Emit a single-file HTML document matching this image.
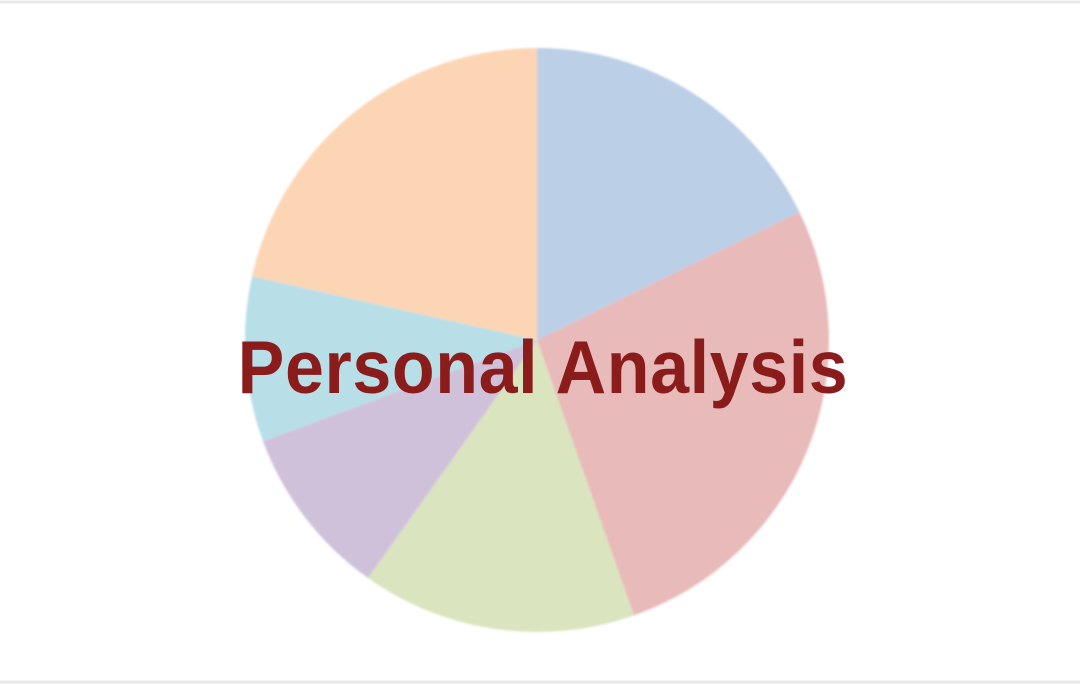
<!DOCTYPE html>
<html><head><meta charset="utf-8"><style>
html,body{margin:0;padding:0;background:#fff;}
body{width:1080px;height:684px;position:relative;overflow:hidden;font-family:"Liberation Sans",sans-serif;}
.t{position:absolute;left:0;width:1080px;top:322px;text-align:center;font-weight:bold;font-size:70px;color:#8a1c1c;line-height:90px;transform:scaleY(1.08);letter-spacing:0.6px;padding-left:6px;box-sizing:border-box;}
</style></head><body>
<svg width="1080" height="684" style="position:absolute;left:0;top:0">
<defs><filter id="b" x="-5%" y="-5%" width="110%" height="110%"><feGaussianBlur stdDeviation="1"/></filter></defs>
<line x1="0" y1="2" x2="1080" y2="2" stroke="#e8e8e8" stroke-width="3"/>
<line x1="0" y1="682" x2="1080" y2="682" stroke="#e8e8e8" stroke-width="3"/>
<g filter="url(#b)">
<path d="M537,340 L537,48 A292,292 0 0 1 799.4,212 Z" fill="#bbcfe6"/>
<path d="M537,340 L799.4,212 A292,292 0 0 1 634,615.4 Z" fill="#e8bab9"/>
<path d="M537,340 L634,615.4 A292,292 0 0 1 368,578 Z" fill="#dae4be"/>
<path d="M537,340 L368,578 A292,292 0 0 1 263,441.3 Z" fill="#d0c1da"/>
<path d="M537,340 L263,441.3 A292,292 0 0 1 252,276.3 Z" fill="#b8dfe8"/>
<path d="M537,340 L252,276.3 A292,292 0 0 1 537,48 Z" fill="#fcd5b5"/>
</g>
</svg>
<div class="t">Personal Analysis</div>
</body></html>
